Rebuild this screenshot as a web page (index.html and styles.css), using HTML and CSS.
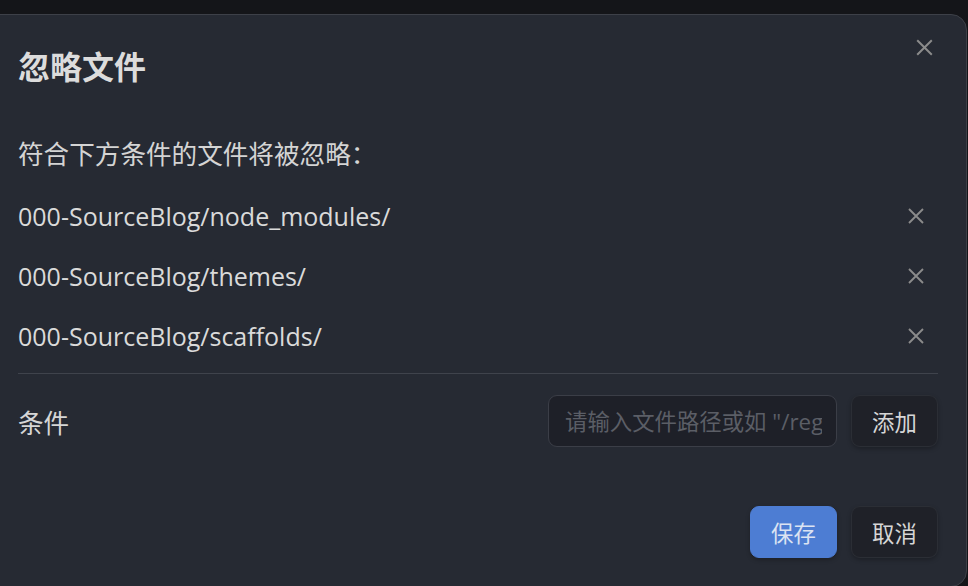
FILE: index.html
```html
<!DOCTYPE html>
<html lang="zh-CN">
<head>
<meta charset="utf-8">
<title>忽略文件</title>
<link rel="stylesheet" href="styles.css">
</head>
<body>
<div class="modal">
  <button class="modal-close" aria-label="关闭">
    <svg viewBox="0 0 24 24" width="25" height="25"><path d="M5 5L19 19M19 5L5 19"/></svg>
  </button>
  <div class="modal-title">忽略文件</div>
  <div class="modal-desc">符合下方条件的文件将被忽略：</div>
  <div class="filter-list">
    <div class="filter-row">
      <span class="filter-text">000-SourceBlog/node_modules/</span>
      <button class="row-remove" aria-label="删除"><svg viewBox="0 0 24 24" width="24" height="24"><path d="M5 5L19 19M19 5L5 19"/></svg></button>
    </div>
    <div class="filter-row">
      <span class="filter-text">000-SourceBlog/themes/</span>
      <button class="row-remove" aria-label="删除"><svg viewBox="0 0 24 24" width="24" height="24"><path d="M5 5L19 19M19 5L5 19"/></svg></button>
    </div>
    <div class="filter-row">
      <span class="filter-text">000-SourceBlog/scaffolds/</span>
      <button class="row-remove" aria-label="删除"><svg viewBox="0 0 24 24" width="24" height="24"><path d="M5 5L19 19M19 5L5 19"/></svg></button>
    </div>
  </div>
  <div class="setting-item">
    <div class="setting-name">条件</div>
    <div class="setting-control">
      <input class="text-input" type="text" placeholder="请输入文件路径或如 &quot;/regex/&quot; 的正则表达式">
      <button class="btn">添加</button>
    </div>
  </div>
  <div class="modal-buttons">
    <button class="btn btn-cta">保存</button>
    <button class="btn">取消</button>
  </div>
</div>
</body>
</html>
```

FILE: styles.css
```css
* { box-sizing: border-box; }
html, body {
  margin: 0;
  height: 100%;
  overflow: hidden;
}
body {
  background: #141519;
  padding-top: 14px;
  font-family: "Open Sans", "Noto Sans CJK SC", sans-serif;
  color: #dadada;
}
.modal {
  position: relative;
  margin-left: -20px;
  width: calc(100% + 19px);
  height: 573px;
  background: #262a33;
  border: 1px solid #3d4048;
  border-radius: 16px;
  padding: 30px 28px 0 37px;
}
.modal-close {
  position: absolute;
  top: 17px;
  right: 20px;
  width: 44px;
  height: 30px;
  border: 0;
  background: transparent;
  padding: 0;
  display: flex;
  align-items: center;
  justify-content: center;
}
.modal-close svg, .row-remove svg {
  fill: none;
  stroke: #8b8b8b;
  stroke-width: 1.9;
  stroke-linecap: butt;
}
.modal-title {
  font-family: "Noto Sans CJK SC", sans-serif;
  font-size: 32px;
  font-weight: 700;
  line-height: 40px;
  color: #dcdcdc;
}
.modal-desc {
  margin-top: 50px;
  font-family: "Noto Sans CJK SC", sans-serif;
  font-size: 25.6px;
  line-height: 36px;
  color: #d4d4d4;
}
.filter-list {
  margin-top: 15px;
}
.filter-row {
  height: 60px;
  display: flex;
  align-items: center;
  justify-content: space-between;
}
.filter-text {
  font-size: 25px;
  color: #dadada;
}
.row-remove {
  width: 44px;
  height: 40px;
  border: 0;
  background: transparent;
  padding: 0;
  display: flex;
  align-items: center;
  justify-content: center;
}
.setting-item {
  margin-top: 7px;
  border-top: 1px solid #3f434c;
  padding-top: 21px;
  display: flex;
  align-items: center;
  justify-content: space-between;
}
.setting-name {
  font-family: "Noto Sans CJK SC", sans-serif;
  font-size: 25.6px;
  color: #d6d6d6;
}
.setting-control {
  display: flex;
  gap: 14px;
}
.text-input {
  width: 289px;
  height: 52px;
  background: #1e2028;
  border: 1px solid #3b3e47;
  border-radius: 9px;
  padding: 0 14px 0 16px;
  font-family: "Open Sans", "Noto Sans CJK SC", sans-serif;
  font-size: 22.4px;
  color: #dadada;
  outline: none;
}
.text-input::placeholder {
  color: #5b5e66;
}
.btn {
  height: 52px;
  width: 87px;
  border: 1px solid #2b2e35;
  border-radius: 9px;
  background: #1f2128;
  color: #d6d6d6;
  font-family: "Noto Sans CJK SC", sans-serif;
  font-size: 22.4px;
  padding: 0;
  box-shadow: 0 2px 4px rgba(0, 0, 0, 0.25);
}
.btn-cta {
  background: #4d7dd3;
  border-color: #4d7dd3;
  color: #dbe3f2;
}
.modal-buttons {
  margin-top: 59px;
  display: flex;
  justify-content: flex-end;
  gap: 14px;
}
```
